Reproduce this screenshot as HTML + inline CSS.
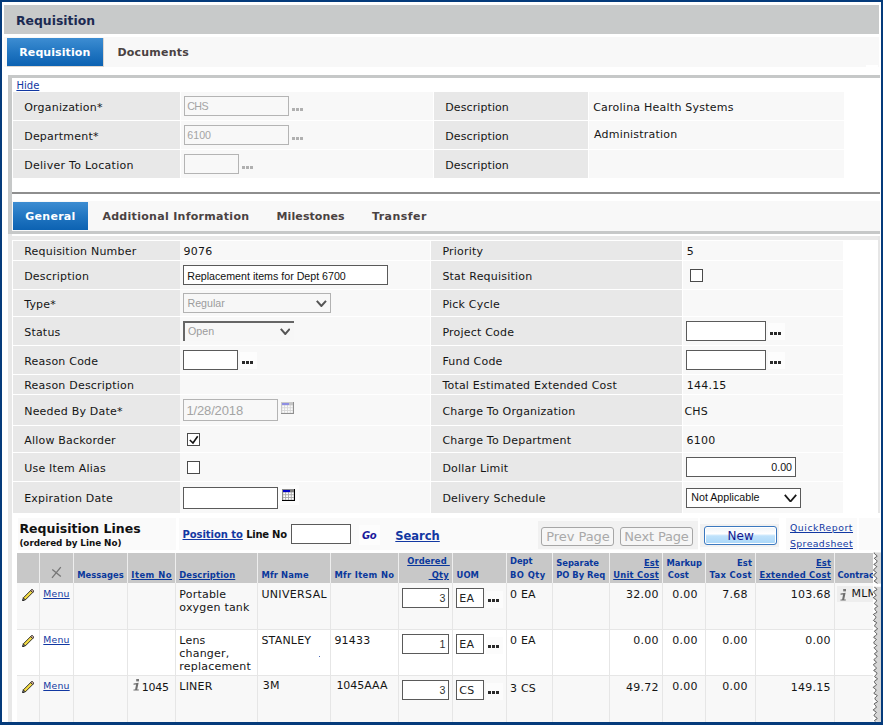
<!DOCTYPE html>
<html lang="en">
<head>
<meta charset="utf-8">
<title>Requisition</title>
<style>
html,body{margin:0;padding:0;}
body{width:883px;height:725px;overflow:hidden;background:#fff;position:relative;font-family:'DejaVu Sans', 'Liberation Sans', sans-serif;}
#app{position:absolute;left:0;top:0;width:883px;height:725px;overflow:hidden;}
#app div,#app span,#app a,#app svg{position:absolute;box-sizing:border-box;}
.t{white-space:nowrap;}
a.t{text-decoration:underline;}
</style>
</head>
<body>
<div id="app">
<div style="left:0px;top:0px;width:883px;height:725px;background:#fff;"></div>
<div style="left:4px;top:5px;width:875px;height:29px;background:#c8caca;"></div>
<span class="t" id="t0" style="top:13px;font:bold 12.4px/15px 'DejaVu Sans', 'Liberation Sans', sans-serif;color:#1c2a52;left:16px;letter-spacing:0.017px;">Requisition</span>
<div style="left:4px;top:37px;width:875px;height:30px;background:#f8f8f8;"></div>
<div style="left:6.5px;top:37.5px;width:97.2px;height:29px;background:#dcd6d0;"></div>
<div style="left:7px;top:38px;width:96.4px;height:28.1px;background:linear-gradient(#3d8dd2,#1f74c0 55%,#0c62b2);"></div>
<span class="t" id="t1" style="top:46px;font:bold 11px/13px 'DejaVu Sans', 'Liberation Sans', sans-serif;color:#fff;left:19.3px;letter-spacing:0.077px;">Requisition</span>
<span class="t" id="t2" style="top:46px;font:bold 11px/13px 'DejaVu Sans', 'Liberation Sans', sans-serif;color:#4a4242;left:117.4px;letter-spacing:0.221px;">Documents</span>
<div style="left:866px;top:65px;width:12px;height:2px;background:#fff;"></div>
<div style="left:8px;top:75px;width:872px;height:3px;background:#c6c8c8;"></div>
<div style="left:8px;top:75px;width:4px;height:159px;background:#c6c8c8;"></div>
<div style="left:8px;top:234px;width:4px;height:488px;background:#e8e8e8;"></div>
<a href="#" class="t" id="t3" style="top:80px;font:normal 10px/11px 'DejaVu Sans', 'Liberation Sans', sans-serif;color:#1238a2;left:16.4px;letter-spacing:0.047px;">Hide</a>
<div style="left:13px;top:92px;width:167px;height:28px;background:#e8e8e8;"></div>
<div style="left:181px;top:92px;width:252px;height:28px;background:#f8f8f8;"></div>
<div style="left:434px;top:92px;width:154px;height:28px;background:#e8e8e8;"></div>
<div style="left:589px;top:92px;width:255px;height:28px;background:#f8f8f8;"></div>
<span class="t" id="t4" style="top:101px;font:normal 11px/13px 'DejaVu Sans', 'Liberation Sans', sans-serif;color:#151515;left:24.2px;letter-spacing:0.206px;">Organization*</span>
<span class="t" id="t5" style="top:101px;font:normal 11px/13px 'DejaVu Sans', 'Liberation Sans', sans-serif;color:#151515;left:445.3px;letter-spacing:0.086px;">Description</span>
<div style="left:13px;top:121px;width:167px;height:28px;background:#e8e8e8;"></div>
<div style="left:181px;top:121px;width:252px;height:28px;background:#f8f8f8;"></div>
<div style="left:434px;top:121px;width:154px;height:28px;background:#e8e8e8;"></div>
<div style="left:589px;top:121px;width:255px;height:28px;background:#f8f8f8;"></div>
<span class="t" id="t6" style="top:130px;font:normal 11px/13px 'DejaVu Sans', 'Liberation Sans', sans-serif;color:#151515;left:24.2px;letter-spacing:0.220px;">Department*</span>
<span class="t" id="t7" style="top:130px;font:normal 11px/13px 'DejaVu Sans', 'Liberation Sans', sans-serif;color:#151515;left:445.3px;letter-spacing:0.086px;">Description</span>
<div style="left:13px;top:150px;width:167px;height:28px;background:#e8e8e8;"></div>
<div style="left:181px;top:150px;width:252px;height:28px;background:#f8f8f8;"></div>
<div style="left:434px;top:150px;width:154px;height:28px;background:#e8e8e8;"></div>
<div style="left:589px;top:150px;width:255px;height:28px;background:#f8f8f8;"></div>
<span class="t" id="t8" style="top:159px;font:normal 11px/13px 'DejaVu Sans', 'Liberation Sans', sans-serif;color:#151515;left:24.2px;letter-spacing:0.282px;">Deliver To Location</span>
<span class="t" id="t9" style="top:159px;font:normal 11px/13px 'DejaVu Sans', 'Liberation Sans', sans-serif;color:#151515;left:445.3px;letter-spacing:0.086px;">Description</span>
<div style="left:184px;top:96px;width:105px;height:20px;background:#f8f8f8;border:1px solid #b4b4b4;"></div>
<span class="t" id="t10" style="top:100px;font:normal 10.67px/12px 'Liberation Sans', 'DejaVu Sans', sans-serif;color:#a4a4a4;left:187.3px;letter-spacing:-0.633px;">CHS</span>
<svg style="left:292px;top:107.5px" width="11" height="3" viewBox="0 0 11 3"><rect x="0" y="0" width="3" height="3" fill="#b0b0b0"/><rect x="4" y="0" width="3" height="3" fill="#b0b0b0"/><rect x="8" y="0" width="3" height="3" fill="#b0b0b0"/></svg>
<div style="left:184px;top:125px;width:105px;height:20px;background:#f8f8f8;border:1px solid #b4b4b4;"></div>
<span class="t" id="t11" style="top:129px;font:normal 10.67px/12px 'Liberation Sans', 'DejaVu Sans', sans-serif;color:#a4a4a4;left:187.3px;">6100</span>
<svg style="left:292px;top:136.5px" width="11" height="3" viewBox="0 0 11 3"><rect x="0" y="0" width="3" height="3" fill="#b0b0b0"/><rect x="4" y="0" width="3" height="3" fill="#b0b0b0"/><rect x="8" y="0" width="3" height="3" fill="#b0b0b0"/></svg>
<div style="left:184px;top:154px;width:55px;height:20px;background:#f8f8f8;border:1px solid #b4b4b4;"></div>
<svg style="left:242px;top:165.5px" width="11" height="3" viewBox="0 0 11 3"><rect x="0" y="0" width="3" height="3" fill="#b0b0b0"/><rect x="4" y="0" width="3" height="3" fill="#b0b0b0"/><rect x="8" y="0" width="3" height="3" fill="#b0b0b0"/></svg>
<span class="t" id="t12" style="top:101px;font:normal 11px/13px 'DejaVu Sans', 'Liberation Sans', sans-serif;color:#151515;left:593.2px;letter-spacing:0.238px;">Carolina Health Systems</span>
<span class="t" id="t13" style="top:128px;font:normal 11px/13px 'DejaVu Sans', 'Liberation Sans', sans-serif;color:#151515;left:594px;letter-spacing:0.210px;">Administration</span>
<div style="left:12px;top:192px;width:868px;height:2px;background:#8e8e8e;"></div>
<div style="left:12px;top:201px;width:868px;height:30px;background:#f8f8f8;"></div>
<div style="left:13px;top:202px;width:75.3px;height:28.1px;background:linear-gradient(#3d8dd2,#1f74c0 55%,#0c62b2);"></div>
<span class="t" id="t14" style="top:210px;font:bold 11px/13px 'DejaVu Sans', 'Liberation Sans', sans-serif;color:#fff;left:25.3px;letter-spacing:0.271px;">General</span>
<span class="t" id="t15" style="top:210px;font:bold 11px/13px 'DejaVu Sans', 'Liberation Sans', sans-serif;color:#4a4242;left:102.4px;letter-spacing:0.297px;">Additional Information</span>
<span class="t" id="t16" style="top:210px;font:bold 11px/13px 'DejaVu Sans', 'Liberation Sans', sans-serif;color:#4a4242;left:276.6px;letter-spacing:0.084px;">Milestones</span>
<span class="t" id="t17" style="top:210px;font:bold 11px/13px 'DejaVu Sans', 'Liberation Sans', sans-serif;color:#4a4242;left:372px;letter-spacing:0.450px;">Transfer</span>
<div style="left:12px;top:231px;width:868px;height:3.2px;background:#c6c8c8;"></div>
<div style="left:12px;top:236px;width:868px;height:4px;background:#e9e9e9;"></div>
<div style="left:878px;top:236px;width:2.4px;height:277px;background:#e6e6e6;"></div>
<div style="left:13px;top:241px;width:166.5px;height:19px;background:#e8e8e8;"></div>
<div style="left:180px;top:241px;width:250.3px;height:19px;background:#f8f8f8;"></div>
<div style="left:431px;top:241px;width:251px;height:19px;background:#e8e8e8;"></div>
<div style="left:683px;top:241px;width:160px;height:19px;background:#f8f8f8;"></div>
<span class="t" id="t18" style="top:245px;font:normal 11px/13px 'DejaVu Sans', 'Liberation Sans', sans-serif;color:#151515;left:24.2px;letter-spacing:0.210px;">Requisition Number</span>
<span class="t" id="t19" style="top:245px;font:normal 11px/13px 'DejaVu Sans', 'Liberation Sans', sans-serif;color:#151515;left:442.4px;letter-spacing:0.210px;">Priority</span>
<div style="left:13px;top:261px;width:166.5px;height:28px;background:#e8e8e8;"></div>
<div style="left:180px;top:261px;width:250.3px;height:28px;background:#f8f8f8;"></div>
<div style="left:431px;top:261px;width:251px;height:28px;background:#e8e8e8;"></div>
<div style="left:683px;top:261px;width:160px;height:28px;background:#f8f8f8;"></div>
<span class="t" id="t20" style="top:270px;font:normal 11px/13px 'DejaVu Sans', 'Liberation Sans', sans-serif;color:#151515;left:24.2px;letter-spacing:0.210px;">Description</span>
<span class="t" id="t21" style="top:270px;font:normal 11px/13px 'DejaVu Sans', 'Liberation Sans', sans-serif;color:#151515;left:442.4px;letter-spacing:0.210px;">Stat Requisition</span>
<div style="left:13px;top:290px;width:166.5px;height:26.100000000000023px;background:#e8e8e8;"></div>
<div style="left:180px;top:290px;width:250.3px;height:26.100000000000023px;background:#f8f8f8;"></div>
<div style="left:431px;top:290px;width:251px;height:26.100000000000023px;background:#e8e8e8;"></div>
<div style="left:683px;top:290px;width:160px;height:26.100000000000023px;background:#f8f8f8;"></div>
<span class="t" id="t22" style="top:298px;font:normal 11px/13px 'DejaVu Sans', 'Liberation Sans', sans-serif;color:#151515;left:24.2px;letter-spacing:0.210px;">Type*</span>
<span class="t" id="t23" style="top:298px;font:normal 11px/13px 'DejaVu Sans', 'Liberation Sans', sans-serif;color:#151515;left:442.4px;letter-spacing:0.210px;">Pick Cycle</span>
<div style="left:13px;top:317px;width:166.5px;height:28px;background:#e8e8e8;"></div>
<div style="left:180px;top:317px;width:250.3px;height:28px;background:#f8f8f8;"></div>
<div style="left:431px;top:317px;width:251px;height:28px;background:#e8e8e8;"></div>
<div style="left:683px;top:317px;width:160px;height:28px;background:#f8f8f8;"></div>
<span class="t" id="t24" style="top:326px;font:normal 11px/13px 'DejaVu Sans', 'Liberation Sans', sans-serif;color:#151515;left:24.2px;letter-spacing:0.210px;">Status</span>
<span class="t" id="t25" style="top:326px;font:normal 11px/13px 'DejaVu Sans', 'Liberation Sans', sans-serif;color:#151515;left:442.4px;letter-spacing:0.210px;">Project Code</span>
<div style="left:13px;top:346px;width:166.5px;height:28px;background:#e8e8e8;"></div>
<div style="left:180px;top:346px;width:250.3px;height:28px;background:#f8f8f8;"></div>
<div style="left:431px;top:346px;width:251px;height:28px;background:#e8e8e8;"></div>
<div style="left:683px;top:346px;width:160px;height:28px;background:#f8f8f8;"></div>
<span class="t" id="t26" style="top:355px;font:normal 11px/13px 'DejaVu Sans', 'Liberation Sans', sans-serif;color:#151515;left:24.2px;letter-spacing:0.210px;">Reason Code</span>
<span class="t" id="t27" style="top:355px;font:normal 11px/13px 'DejaVu Sans', 'Liberation Sans', sans-serif;color:#151515;left:442.4px;letter-spacing:0.210px;">Fund Code</span>
<div style="left:13px;top:375px;width:166.5px;height:19px;background:#e8e8e8;"></div>
<div style="left:180px;top:375px;width:250.3px;height:19px;background:#f8f8f8;"></div>
<div style="left:431px;top:375px;width:251px;height:19px;background:#e8e8e8;"></div>
<div style="left:683px;top:375px;width:160px;height:19px;background:#f8f8f8;"></div>
<span class="t" id="t28" style="top:379px;font:normal 11px/13px 'DejaVu Sans', 'Liberation Sans', sans-serif;color:#151515;left:24.2px;letter-spacing:0.210px;">Reason Description</span>
<span class="t" id="t29" style="top:379px;font:normal 11px/13px 'DejaVu Sans', 'Liberation Sans', sans-serif;color:#151515;left:442.4px;letter-spacing:0.210px;">Total Estimated Extended Cost</span>
<div style="left:13px;top:395px;width:166.5px;height:30px;background:#e8e8e8;"></div>
<div style="left:180px;top:395px;width:250.3px;height:30px;background:#f8f8f8;"></div>
<div style="left:431px;top:395px;width:251px;height:30px;background:#e8e8e8;"></div>
<div style="left:683px;top:395px;width:160px;height:30px;background:#f8f8f8;"></div>
<span class="t" id="t30" style="top:405px;font:normal 11px/13px 'DejaVu Sans', 'Liberation Sans', sans-serif;color:#151515;left:24.2px;letter-spacing:0.210px;">Needed By Date*</span>
<span class="t" id="t31" style="top:405px;font:normal 11px/13px 'DejaVu Sans', 'Liberation Sans', sans-serif;color:#151515;left:442.4px;letter-spacing:0.210px;">Charge To Organization</span>
<div style="left:13px;top:426px;width:166.5px;height:26px;background:#e8e8e8;"></div>
<div style="left:180px;top:426px;width:250.3px;height:26px;background:#f8f8f8;"></div>
<div style="left:431px;top:426px;width:251px;height:26px;background:#e8e8e8;"></div>
<div style="left:683px;top:426px;width:160px;height:26px;background:#f8f8f8;"></div>
<span class="t" id="t32" style="top:434px;font:normal 11px/13px 'DejaVu Sans', 'Liberation Sans', sans-serif;color:#151515;left:24.2px;letter-spacing:0.210px;">Allow Backorder</span>
<span class="t" id="t33" style="top:434px;font:normal 11px/13px 'DejaVu Sans', 'Liberation Sans', sans-serif;color:#151515;left:442.4px;letter-spacing:0.210px;">Charge To Department</span>
<div style="left:13px;top:453px;width:166.5px;height:28px;background:#e8e8e8;"></div>
<div style="left:180px;top:453px;width:250.3px;height:28px;background:#f8f8f8;"></div>
<div style="left:431px;top:453px;width:251px;height:28px;background:#e8e8e8;"></div>
<div style="left:683px;top:453px;width:160px;height:28px;background:#f8f8f8;"></div>
<span class="t" id="t34" style="top:462px;font:normal 11px/13px 'DejaVu Sans', 'Liberation Sans', sans-serif;color:#151515;left:24.2px;letter-spacing:0.210px;">Use Item Alias</span>
<span class="t" id="t35" style="top:462px;font:normal 11px/13px 'DejaVu Sans', 'Liberation Sans', sans-serif;color:#151515;left:442.4px;letter-spacing:0.210px;">Dollar Limit</span>
<div style="left:13px;top:482px;width:166.5px;height:30.5px;background:#e8e8e8;"></div>
<div style="left:180px;top:482px;width:250.3px;height:30.5px;background:#f8f8f8;"></div>
<div style="left:431px;top:482px;width:251px;height:30.5px;background:#e8e8e8;"></div>
<div style="left:683px;top:482px;width:160px;height:30.5px;background:#f8f8f8;"></div>
<span class="t" id="t36" style="top:492px;font:normal 11px/13px 'DejaVu Sans', 'Liberation Sans', sans-serif;color:#151515;left:24.2px;letter-spacing:0.210px;">Expiration Date</span>
<span class="t" id="t37" style="top:492px;font:normal 11px/13px 'DejaVu Sans', 'Liberation Sans', sans-serif;color:#151515;left:442.4px;letter-spacing:0.210px;">Delivery Schedule</span>
<span class="t" id="t38" style="top:245px;font:normal 11px/13px 'DejaVu Sans', 'Liberation Sans', sans-serif;color:#151515;left:183.6px;letter-spacing:0.210px;">9076</span>
<div style="left:183px;top:265px;width:205px;height:20px;background:#fff;border:1px solid #5a5a5a;"></div>
<span class="t" id="t39" style="top:270px;font:normal 10.67px/12px 'Liberation Sans', 'DejaVu Sans', sans-serif;color:#111;left:187.2px;letter-spacing:-0.005px;">Replacement items for Dept 6700</span>
<div style="left:183px;top:293px;width:148px;height:20px;background:#f7f7f7;border:1px solid #b2b2b2;"></div>
<span class="t" id="t40" style="top:297px;font:normal 10.67px/12px 'Liberation Sans', 'DejaVu Sans', sans-serif;color:#9c9c9c;left:187.5px;">Regular</span>
<svg style="left:316px;top:299.6px" width="10.8" height="7" viewBox="0 0 10.8 7"><path d="M0.8 0.8 L5.4 6 L10.0 0.8" fill="none" stroke="#555" stroke-width="2"/></svg>
<div style="left:183px;top:321px;width:111px;height:20px;background:#f7f7f7;border-top:2px solid #666;border-left:2px solid #666;"></div>
<span class="t" id="t41" style="top:325px;font:normal 10.67px/12px 'Liberation Sans', 'DejaVu Sans', sans-serif;color:#9c9c9c;left:188px;">Open</span>
<svg style="left:279.8px;top:327.6px" width="10.6" height="7" viewBox="0 0 10.6 7"><path d="M0.8 0.8 L5.3 6 L9.799999999999999 0.8" fill="none" stroke="#555" stroke-width="2"/></svg>
<div style="left:183px;top:350px;width:55px;height:20px;background:#fff;border:1px solid #5a5a5a;"></div>
<div style="left:240px;top:351.8px;width:17px;height:17px;background:#fdfdfd;"></div>
<svg style="left:242px;top:360.8px" width="11" height="3" viewBox="0 0 11 3"><rect x="0" y="0" width="3" height="3" fill="#2a2a2a"/><rect x="4" y="0" width="3" height="3" fill="#2a2a2a"/><rect x="8" y="0" width="3" height="3" fill="#2a2a2a"/></svg>
<div style="left:183px;top:399px;width:95px;height:22px;background:#f8f8f8;border:1px solid #b4b4b4;"></div>
<span class="t" id="t42" style="top:403px;font:normal 13px/15px 'Liberation Sans', 'DejaVu Sans', sans-serif;color:#a4a4a4;left:186.4px;letter-spacing:-0.138px;">1/28/2018</span>
<svg style="left:281px;top:402px;opacity:0.42;" width="13" height="12" viewBox="0 0 13 12"><rect x="0" y="0" width="13" height="12" fill="#a8a8a8"/><rect x="0" y="0" width="13" height="1" fill="#8a8a8a"/><rect x="0" y="0" width="1" height="12" fill="#8a8a8a"/><rect x="12" y="0" width="1" height="12" fill="#000"/><rect x="0" y="11" width="13" height="1" fill="#000"/><rect x="1" y="1" width="7" height="2.1" fill="#0000c8"/><rect x="8" y="1" width="4" height="2.1" fill="#808080"/><rect x="1.3" y="3.5" width="1.9" height="1.8" fill="#fff"/><rect x="4.1" y="3.5" width="1.9" height="1.8" fill="#fff"/><rect x="6.9" y="3.5" width="1.9" height="1.8" fill="#fff"/><rect x="9.7" y="3.5" width="1.9" height="1.8" fill="#fff"/><rect x="1.3" y="6.2" width="1.9" height="1.8" fill="#fff"/><rect x="4.1" y="6.2" width="1.9" height="1.8" fill="#fff"/><rect x="6.9" y="6.2" width="1.9" height="1.8" fill="#fff"/><rect x="9.7" y="6.2" width="1.9" height="1.8" fill="#fff"/><rect x="1.3" y="8.9" width="1.9" height="1.8" fill="#fff"/><rect x="4.1" y="8.9" width="1.9" height="1.8" fill="#fff"/><rect x="6.9" y="8.9" width="1.9" height="1.8" fill="#fff"/><rect x="9.7" y="8.9" width="1.9" height="1.8" fill="#fff"/></svg>
<div style="left:187px;top:433px;width:13px;height:13px;background:#fff;border:1px solid #4a4a4a;"></div>
<svg style="left:187px;top:433px" width="13" height="13" viewBox="0 0 13 13"><path d="M2.8 7 L6 10 L10.7 3.3" fill="none" stroke="#111" stroke-width="1.6"/></svg>
<div style="left:187px;top:461px;width:13px;height:13px;background:#fff;border:1px solid #4a4a4a;"></div>
<div style="left:183px;top:487px;width:95px;height:22px;background:#fff;border:1px solid #5a5a5a;"></div>
<div style="left:278.4px;top:484.8px;width:20.6px;height:20px;background:#fcfcfc;"></div>
<svg style="left:282px;top:489px;" width="13" height="12" viewBox="0 0 13 12"><rect x="0" y="0" width="13" height="12" fill="#a8a8a8"/><rect x="0" y="0" width="13" height="1" fill="#8a8a8a"/><rect x="0" y="0" width="1" height="12" fill="#8a8a8a"/><rect x="12" y="0" width="1" height="12" fill="#000"/><rect x="0" y="11" width="13" height="1" fill="#000"/><rect x="1" y="1" width="7" height="2.1" fill="#0000c8"/><rect x="8" y="1" width="4" height="2.1" fill="#808080"/><rect x="1.3" y="3.5" width="1.9" height="1.8" fill="#fff"/><rect x="4.1" y="3.5" width="1.9" height="1.8" fill="#fff"/><rect x="6.9" y="3.5" width="1.9" height="1.8" fill="#fff"/><rect x="9.7" y="3.5" width="1.9" height="1.8" fill="#fff"/><rect x="1.3" y="6.2" width="1.9" height="1.8" fill="#fff"/><rect x="4.1" y="6.2" width="1.9" height="1.8" fill="#fff"/><rect x="6.9" y="6.2" width="1.9" height="1.8" fill="#fff"/><rect x="9.7" y="6.2" width="1.9" height="1.8" fill="#fff"/><rect x="1.3" y="8.9" width="1.9" height="1.8" fill="#fff"/><rect x="4.1" y="8.9" width="1.9" height="1.8" fill="#fff"/><rect x="6.9" y="8.9" width="1.9" height="1.8" fill="#fff"/><rect x="9.7" y="8.9" width="1.9" height="1.8" fill="#fff"/></svg>
<span class="t" id="t43" style="top:245px;font:normal 11px/13px 'DejaVu Sans', 'Liberation Sans', sans-serif;color:#151515;left:686.8px;letter-spacing:0.210px;">5</span>
<div style="left:690px;top:269px;width:13px;height:13px;background:#fff;border:1px solid #4a4a4a;"></div>
<div style="left:686px;top:321px;width:80px;height:20px;background:#fff;border:1px solid #5a5a5a;"></div>
<div style="left:768px;top:322.6px;width:17px;height:17px;background:#fdfdfd;"></div>
<svg style="left:770px;top:331.6px" width="11" height="3" viewBox="0 0 11 3"><rect x="0" y="0" width="3" height="3" fill="#2a2a2a"/><rect x="4" y="0" width="3" height="3" fill="#2a2a2a"/><rect x="8" y="0" width="3" height="3" fill="#2a2a2a"/></svg>
<div style="left:686px;top:350px;width:80px;height:20px;background:#fff;border:1px solid #5a5a5a;"></div>
<div style="left:768px;top:351.6px;width:17px;height:17px;background:#fdfdfd;"></div>
<svg style="left:770px;top:360.6px" width="11" height="3" viewBox="0 0 11 3"><rect x="0" y="0" width="3" height="3" fill="#2a2a2a"/><rect x="4" y="0" width="3" height="3" fill="#2a2a2a"/><rect x="8" y="0" width="3" height="3" fill="#2a2a2a"/></svg>
<span class="t" id="t44" style="top:379px;font:normal 11px/13px 'DejaVu Sans', 'Liberation Sans', sans-serif;color:#151515;left:686.8px;letter-spacing:0.210px;">144.15</span>
<span class="t" id="t45" style="top:405px;font:normal 11px/13px 'DejaVu Sans', 'Liberation Sans', sans-serif;color:#151515;left:684.4px;letter-spacing:0.210px;">CHS</span>
<span class="t" id="t46" style="top:434px;font:normal 11px/13px 'DejaVu Sans', 'Liberation Sans', sans-serif;color:#151515;left:686.6px;letter-spacing:0.210px;">6100</span>
<div style="left:686px;top:457px;width:110px;height:20px;background:#fff;border:1px solid #5a5a5a;"></div>
<span class="t" id="t47" style="top:461px;font:normal 10.67px/12px 'Liberation Sans', 'DejaVu Sans', sans-serif;color:#111;right:91px;">0.00</span>
<div style="left:686px;top:488px;width:115px;height:20px;background:#fff;border:1px solid #5a5a5a;"></div>
<span class="t" id="t48" style="top:491px;font:normal 10.67px/12px 'Liberation Sans', 'DejaVu Sans', sans-serif;color:#111;left:691.3px;">Not Applicable</span>
<svg style="left:783.5px;top:493.5px" width="13" height="8.5" viewBox="0 0 13 8.5"><path d="M0.8 0.8 L6.5 7.5 L12.2 0.8" fill="none" stroke="#1a1a1a" stroke-width="1.8"/></svg>
<div style="left:17.5px;top:517.5px;width:158.3px;height:32.3px;background:#fafafa;"></div>
<div style="left:179px;top:517.5px;width:519px;height:32.3px;background:#fafafa;"></div>
<div style="left:700px;top:517.5px;width:79px;height:32.3px;background:#fafafa;"></div>
<div style="left:786px;top:517.5px;width:71px;height:32.3px;background:#fafafa;"></div>
<div style="left:859px;top:517.5px;width:21px;height:32.3px;background:#fafafa;"></div>
<span class="t" id="t49" style="top:521px;font:bold 12.5px/15px 'DejaVu Sans', 'Liberation Sans', sans-serif;color:#111;left:19.4px;letter-spacing:0.010px;">Requisition Lines</span>
<span class="t" id="t50" style="top:538px;font:bold 8.8px/10px 'DejaVu Sans', 'Liberation Sans', sans-serif;color:#111;left:19.4px;letter-spacing:-0.038px;">(ordered by Line No)</span>
<a href="#" class="t" id="t51" style="top:529px;font:bold 10px/11px 'DejaVu Sans', 'Liberation Sans', sans-serif;color:#1238a2;left:182.5px;letter-spacing:-0.057px;">Position to</a>
<span class="t" id="t52" style="top:529px;font:bold 10px/11px 'DejaVu Sans', 'Liberation Sans', sans-serif;color:#111;left:246.2px;letter-spacing:-0.260px;">Line No</span>
<div style="left:291px;top:524px;width:60px;height:20px;background:#fff;border:1px solid #5a5a5a;"></div>
<div style="left:358.5px;top:524.5px;width:21.5px;height:20px;background:#fdfdfd;"></div>
<span class="t" id="t53" style="top:530px;font:italic bold 10px/11px 'DejaVu Sans', 'Liberation Sans', sans-serif;color:#1a1a9c;left:362px;letter-spacing:-0.339px;">Go</span>
<a href="#" class="t" id="t54" style="top:529px;font:bold 11.5px/14px 'DejaVu Sans', 'Liberation Sans', sans-serif;color:#1238a2;left:395.3px;letter-spacing:-0.005px;">Search</a>
<div style="left:538px;top:521px;width:159.5px;height:27.5px;background:#f1f1f1;"></div>
<div style="left:541px;top:527px;width:73px;height:19px;background:#f6f6f6;border:1px solid #a6a6a6;border-radius:3px;"></div>
<span class="t" id="t55" style="top:529px;font:normal 13px/15px 'DejaVu Sans', 'Liberation Sans', sans-serif;color:#a9a9a9;left:546.2px;letter-spacing:-0.041px;">Prev Page</span>
<div style="left:620px;top:527px;width:73px;height:19px;background:#f6f6f6;border:1px solid #a6a6a6;border-radius:3px;"></div>
<span class="t" id="t56" style="top:529px;font:normal 13px/15px 'DejaVu Sans', 'Liberation Sans', sans-serif;color:#a9a9a9;left:624.3px;letter-spacing:-0.166px;">Next Page</span>
<div style="left:700px;top:524px;width:79px;height:22.5px;background:#f1f1f1;"></div>
<div style="left:704px;top:526px;width:73px;height:19px;background:linear-gradient(#eef3f8 0,#ffffff 40%,#bfe2fb 52%,#a9d6f8 100%);border:1px solid #3b78bf;border-radius:3px;box-shadow:inset 0 0 0 1px #fff;"></div>
<span class="t" id="t57" style="top:529px;font:normal 12px/14px 'DejaVu Sans', 'Liberation Sans', sans-serif;color:#15158c;left:727.4px;letter-spacing:0.138px;">New</span>
<a href="#" class="t" id="t58" style="top:522px;font:normal 9.3px/11px 'DejaVu Sans', 'Liberation Sans', sans-serif;color:#1238a2;left:790px;letter-spacing:0.536px;">QuickReport</a>
<a href="#" class="t" id="t59" style="top:538px;font:normal 9.3px/11px 'DejaVu Sans', 'Liberation Sans', sans-serif;color:#1238a2;left:790px;letter-spacing:0.403px;">Spreadsheet</a>
<div style="left:17px;top:552.6px;width:864px;height:30.2px;background:#c8c8c8;"></div>
<div style="left:17px;top:582.8px;width:864px;height:46.5px;background:#f8f8f8;"></div>
<div style="left:17px;top:629.3px;width:864px;height:46.0px;background:#ffffff;"></div>
<div style="left:17px;top:675.3px;width:864px;height:46.700000000000045px;background:#f8f8f8;"></div>
<div style="left:17px;top:628.9px;width:864px;height:1px;background:#e6e6e6;"></div>
<div style="left:17px;top:674.9px;width:864px;height:1px;background:#e6e6e6;"></div>
<div style="left:39px;top:552.6px;width:1px;height:30.2px;background:#eeeeee;"></div>
<div style="left:39px;top:582.8px;width:1px;height:139.2px;background:#e6e6e6;"></div>
<div style="left:73px;top:552.6px;width:1px;height:30.2px;background:#eeeeee;"></div>
<div style="left:73px;top:582.8px;width:1px;height:139.2px;background:#e6e6e6;"></div>
<div style="left:127px;top:552.6px;width:1px;height:30.2px;background:#eeeeee;"></div>
<div style="left:127px;top:582.8px;width:1px;height:139.2px;background:#e6e6e6;"></div>
<div style="left:175px;top:552.6px;width:1px;height:30.2px;background:#eeeeee;"></div>
<div style="left:175px;top:582.8px;width:1px;height:139.2px;background:#e6e6e6;"></div>
<div style="left:257px;top:552.6px;width:1px;height:30.2px;background:#eeeeee;"></div>
<div style="left:257px;top:582.8px;width:1px;height:139.2px;background:#e6e6e6;"></div>
<div style="left:330px;top:552.6px;width:1px;height:30.2px;background:#eeeeee;"></div>
<div style="left:330px;top:582.8px;width:1px;height:139.2px;background:#e6e6e6;"></div>
<div style="left:398px;top:552.6px;width:1px;height:30.2px;background:#eeeeee;"></div>
<div style="left:398px;top:582.8px;width:1px;height:139.2px;background:#e6e6e6;"></div>
<div style="left:452px;top:552.6px;width:1px;height:30.2px;background:#eeeeee;"></div>
<div style="left:452px;top:582.8px;width:1px;height:139.2px;background:#e6e6e6;"></div>
<div style="left:506px;top:552.6px;width:1px;height:30.2px;background:#eeeeee;"></div>
<div style="left:506px;top:582.8px;width:1px;height:139.2px;background:#e6e6e6;"></div>
<div style="left:552px;top:552.6px;width:1px;height:30.2px;background:#eeeeee;"></div>
<div style="left:552px;top:582.8px;width:1px;height:139.2px;background:#e6e6e6;"></div>
<div style="left:609px;top:552.6px;width:1px;height:30.2px;background:#eeeeee;"></div>
<div style="left:609px;top:582.8px;width:1px;height:139.2px;background:#e6e6e6;"></div>
<div style="left:662px;top:552.6px;width:1px;height:30.2px;background:#eeeeee;"></div>
<div style="left:662px;top:582.8px;width:1px;height:139.2px;background:#e6e6e6;"></div>
<div style="left:705px;top:552.6px;width:1px;height:30.2px;background:#eeeeee;"></div>
<div style="left:705px;top:582.8px;width:1px;height:139.2px;background:#e6e6e6;"></div>
<div style="left:755px;top:552.6px;width:1px;height:30.2px;background:#eeeeee;"></div>
<div style="left:755px;top:582.8px;width:1px;height:139.2px;background:#e6e6e6;"></div>
<div style="left:834px;top:552.6px;width:1px;height:30.2px;background:#eeeeee;"></div>
<div style="left:834px;top:582.8px;width:1px;height:139.2px;background:#e6e6e6;"></div>
<svg style="left:51px;top:566px" width="11" height="13" viewBox="0 0 11 13"><path d="M1 11.8 L9.8 1.2 M1.3 3.5 L9.8 10.6" stroke="#767676" stroke-width="1.3" fill="none"/></svg>
<span class="t" id="t60" style="top:569px;font:bold 9.3px/11px 'DejaVu Sans Condensed', 'DejaVu Sans', sans-serif;color:#0a389c;left:77.2px;letter-spacing:0.044px;">Messages</span>
<a href="#" class="t" id="t61" style="top:569px;font:bold 9.3px/11px 'DejaVu Sans Condensed', 'DejaVu Sans', sans-serif;color:#0a389c;left:131.3px;letter-spacing:0.506px;text-decoration:underline;">Item No</a>
<a href="#" class="t" id="t62" style="top:569px;font:bold 9.3px/11px 'DejaVu Sans Condensed', 'DejaVu Sans', sans-serif;color:#0a389c;left:179.2px;letter-spacing:0.181px;text-decoration:underline;">Description</a>
<span class="t" id="t63" style="top:569px;font:bold 9.3px/11px 'DejaVu Sans Condensed', 'DejaVu Sans', sans-serif;color:#0a389c;left:261.4px;letter-spacing:0.171px;">Mfr Name</span>
<span class="t" id="t64" style="top:569px;font:bold 9.3px/11px 'DejaVu Sans Condensed', 'DejaVu Sans', sans-serif;color:#0a389c;left:334.4px;letter-spacing:0.349px;">Mfr Item No</span>
<a href="#" class="t" id="t65" style="top:555px;font:bold 9.3px/11px 'DejaVu Sans Condensed', 'DejaVu Sans', sans-serif;color:#0a389c;right:433.2px;letter-spacing:0.124px;text-decoration:underline;">Ordered&nbsp;</a>
<a href="#" class="t" id="t66" style="top:569px;font:bold 9.3px/11px 'DejaVu Sans Condensed', 'DejaVu Sans', sans-serif;color:#0a389c;right:434px;letter-spacing:0.229px;text-decoration:underline;">&nbsp;Qty</a>
<span class="t" id="t67" style="top:569px;font:bold 9.3px/11px 'DejaVu Sans Condensed', 'DejaVu Sans', sans-serif;color:#0a389c;left:456.5px;letter-spacing:0.089px;">UOM</span>
<span class="t" id="t68" style="top:555px;font:bold 9.3px/11px 'DejaVu Sans Condensed', 'DejaVu Sans', sans-serif;color:#0a389c;left:510px;">Dept</span>
<span class="t" id="t69" style="top:569px;font:bold 9.3px/11px 'DejaVu Sans Condensed', 'DejaVu Sans', sans-serif;color:#0a389c;left:510px;letter-spacing:0.458px;">BO Qty</span>
<span class="t" id="t70" style="top:557px;font:bold 9.3px/11px 'DejaVu Sans Condensed', 'DejaVu Sans', sans-serif;color:#0a389c;left:556.2px;">Separate</span>
<span class="t" id="t71" style="top:569px;font:bold 9.3px/11px 'DejaVu Sans Condensed', 'DejaVu Sans', sans-serif;color:#0a389c;left:556.2px;">PO By Req</span>
<a href="#" class="t" id="t72" style="top:557px;font:bold 9.3px/11px 'DejaVu Sans Condensed', 'DejaVu Sans', sans-serif;color:#0a389c;right:224px;letter-spacing:0.099px;text-decoration:underline;">Est</a>
<a href="#" class="t" id="t73" style="top:569px;font:bold 9.3px/11px 'DejaVu Sans Condensed', 'DejaVu Sans', sans-serif;color:#0a389c;right:224px;letter-spacing:0.268px;text-decoration:underline;">Unit Cost</a>
<span class="t" id="t74" style="top:557px;font:bold 9.3px/11px 'DejaVu Sans Condensed', 'DejaVu Sans', sans-serif;color:#0a389c;left:666.5px;letter-spacing:-0.018px;">Markup</span>
<span class="t" id="t75" style="top:569px;font:bold 9.3px/11px 'DejaVu Sans Condensed', 'DejaVu Sans', sans-serif;color:#0a389c;left:667.8px;">Cost</span>
<span class="t" id="t76" style="top:557px;font:bold 9.3px/11px 'DejaVu Sans Condensed', 'DejaVu Sans', sans-serif;color:#0a389c;right:131px;letter-spacing:0.099px;">Est</span>
<span class="t" id="t77" style="top:569px;font:bold 9.3px/11px 'DejaVu Sans Condensed', 'DejaVu Sans', sans-serif;color:#0a389c;right:131px;letter-spacing:0.384px;">Tax Cost</span>
<a href="#" class="t" id="t78" style="top:557px;font:bold 9.3px/11px 'DejaVu Sans Condensed', 'DejaVu Sans', sans-serif;color:#0a389c;right:52px;letter-spacing:0.099px;text-decoration:underline;">Est</a>
<a href="#" class="t" id="t79" style="top:569px;font:bold 9.3px/11px 'DejaVu Sans Condensed', 'DejaVu Sans', sans-serif;color:#0a389c;right:52px;letter-spacing:0.264px;text-decoration:underline;">Extended Cost</a>
<span class="t" id="t80" style="top:569px;font:bold 9.3px/11px 'DejaVu Sans Condensed', 'DejaVu Sans', sans-serif;color:#0a389c;left:837.4px;">Contract</span>
<svg style="left:21.6px;top:589.1px" width="12.4" height="12.4" viewBox="0 0 13 13"><path d="M0.6 12.2 L1.38 9.3 L3.5 11.42 Z" fill="#fff" stroke="#151515" stroke-width="0.9" stroke-linejoin="round"/><path d="M0.5 12.3 L0.95 10.6 L2.2 11.85 Z" fill="#000"/><path d="M1.38 9.3 L9.14 1.54 L11.26 3.66 L3.5 11.42 Z" fill="#f2da44" stroke="#151515" stroke-width="0.9" stroke-linejoin="round"/><path d="M9.14 1.54 L10.54 0.3 L12.5 2.26 L11.26 3.66 Z" fill="#f0c4b0" stroke="#151515" stroke-width="0.9" stroke-linejoin="round"/></svg>
<a href="#" class="t" id="t81" style="top:588px;font:normal 9.3px/11px 'DejaVu Sans', 'Liberation Sans', sans-serif;color:#1238a2;left:43.3px;letter-spacing:0.217px;">Menu</a>
<svg style="left:21.6px;top:635.1px" width="12.4" height="12.4" viewBox="0 0 13 13"><path d="M0.6 12.2 L1.38 9.3 L3.5 11.42 Z" fill="#fff" stroke="#151515" stroke-width="0.9" stroke-linejoin="round"/><path d="M0.5 12.3 L0.95 10.6 L2.2 11.85 Z" fill="#000"/><path d="M1.38 9.3 L9.14 1.54 L11.26 3.66 L3.5 11.42 Z" fill="#f2da44" stroke="#151515" stroke-width="0.9" stroke-linejoin="round"/><path d="M9.14 1.54 L10.54 0.3 L12.5 2.26 L11.26 3.66 Z" fill="#f0c4b0" stroke="#151515" stroke-width="0.9" stroke-linejoin="round"/></svg>
<a href="#" class="t" id="t82" style="top:634px;font:normal 9.3px/11px 'DejaVu Sans', 'Liberation Sans', sans-serif;color:#1238a2;left:43.3px;letter-spacing:0.217px;">Menu</a>
<svg style="left:21.6px;top:681.1px" width="12.4" height="12.4" viewBox="0 0 13 13"><path d="M0.6 12.2 L1.38 9.3 L3.5 11.42 Z" fill="#fff" stroke="#151515" stroke-width="0.9" stroke-linejoin="round"/><path d="M0.5 12.3 L0.95 10.6 L2.2 11.85 Z" fill="#000"/><path d="M1.38 9.3 L9.14 1.54 L11.26 3.66 L3.5 11.42 Z" fill="#f2da44" stroke="#151515" stroke-width="0.9" stroke-linejoin="round"/><path d="M9.14 1.54 L10.54 0.3 L12.5 2.26 L11.26 3.66 Z" fill="#f0c4b0" stroke="#151515" stroke-width="0.9" stroke-linejoin="round"/></svg>
<a href="#" class="t" id="t83" style="top:680px;font:normal 9.3px/11px 'DejaVu Sans', 'Liberation Sans', sans-serif;color:#1238a2;left:43.3px;letter-spacing:0.217px;">Menu</a>
<span class="t" id="t84" style="top:588px;font:normal 11px/13px 'DejaVu Sans', 'Liberation Sans', sans-serif;color:#151515;left:179.3px;letter-spacing:0.210px;">Portable</span>
<span class="t" id="t85" style="top:601px;font:normal 11px/13px 'DejaVu Sans', 'Liberation Sans', sans-serif;color:#151515;left:179.3px;letter-spacing:0.210px;">oxygen tank</span>
<span class="t" id="t86" style="top:634px;font:normal 11px/13px 'DejaVu Sans', 'Liberation Sans', sans-serif;color:#151515;left:179.3px;letter-spacing:0.210px;">Lens</span>
<span class="t" id="t87" style="top:647px;font:normal 11px/13px 'DejaVu Sans', 'Liberation Sans', sans-serif;color:#151515;left:179.3px;letter-spacing:0.210px;">changer,</span>
<span class="t" id="t88" style="top:660px;font:normal 11px/13px 'DejaVu Sans', 'Liberation Sans', sans-serif;color:#151515;left:179.3px;letter-spacing:0.210px;">replacement</span>
<span class="t" id="t89" style="top:680px;font:normal 11px/13px 'DejaVu Sans', 'Liberation Sans', sans-serif;color:#151515;left:179.3px;letter-spacing:0.210px;">LINER</span>
<span class="t" id="t90" style="top:588px;font:normal 11px/13px 'DejaVu Sans', 'Liberation Sans', sans-serif;color:#151515;left:261.4px;letter-spacing:0.346px;">UNIVERSAL</span>
<span class="t" id="t91" style="top:634px;font:normal 11px/13px 'DejaVu Sans', 'Liberation Sans', sans-serif;color:#151515;left:261.4px;letter-spacing:0.210px;">STANLEY</span>
<span class="t" id="t92" style="top:679px;font:normal 11px/13px 'DejaVu Sans', 'Liberation Sans', sans-serif;color:#151515;left:262.7px;letter-spacing:0.210px;">3M</span>
<span class="t" id="t93" style="top:634px;font:normal 11px/13px 'DejaVu Sans', 'Liberation Sans', sans-serif;color:#151515;left:334.4px;letter-spacing:0.210px;">91433</span>
<span class="t" id="t94" style="top:679px;font:normal 11px/13px 'DejaVu Sans', 'Liberation Sans', sans-serif;color:#151515;left:336.4px;letter-spacing:-0.027px;">1045AAA</span>
<svg style="left:133px;top:679.4px" width="7" height="12" viewBox="0 0 7 12"><rect x="3.2" y="0" width="2.8" height="2.4" fill="#767676"/><path d="M0.6 4.6 L5.6 3.8 L4.2 10.4 L5.9 10.4 L5.7 11.6 L0.4 11.6 L0.6 10.4 L2.1 10.4 L3.1 5.6 L0.5 5.8 Z" fill="#6e6e6e"/></svg>
<span class="t" id="t95" style="top:681px;font:normal 11px/13px 'DejaVu Sans', 'Liberation Sans', sans-serif;color:#151515;left:141.8px;letter-spacing:-0.300px;">1045</span>
<div style="left:402px;top:588px;width:47px;height:19.5px;background:#fff;border:1px solid #5a5a5a;"></div>
<span class="t" id="t96" style="top:592px;font:normal 10.67px/12px 'Liberation Sans', 'DejaVu Sans', sans-serif;color:#333;right:437.6px;">3</span>
<div style="left:456px;top:588px;width:28px;height:19.5px;background:#fff;border:1px solid #5a5a5a;"></div>
<span class="t" id="t97" style="top:592px;font:normal 11px/13px 'DejaVu Sans', 'Liberation Sans', sans-serif;color:#222;left:459.3px;letter-spacing:0.210px;">EA</span>
<div style="left:485.5px;top:590.6px;width:17px;height:17.6px;background:#fcfcfc;"></div>
<svg style="left:488px;top:598.7px" width="11" height="3" viewBox="0 0 11 3"><rect x="0" y="0" width="3" height="3" fill="#2a2a2a"/><rect x="4" y="0" width="3" height="3" fill="#2a2a2a"/><rect x="8" y="0" width="3" height="3" fill="#2a2a2a"/></svg>
<span class="t" id="t98" style="top:588px;font:normal 11px/13px 'DejaVu Sans', 'Liberation Sans', sans-serif;color:#151515;left:510px;letter-spacing:0.210px;">0 EA</span>
<span class="t" id="t99" style="top:588px;font:normal 11px/13px 'DejaVu Sans', 'Liberation Sans', sans-serif;color:#151515;right:224.39999999999998px;letter-spacing:0.210px;">32.00</span>
<span class="t" id="t100" style="top:588px;font:normal 11px/13px 'DejaVu Sans', 'Liberation Sans', sans-serif;color:#151515;right:185.39999999999998px;letter-spacing:0.210px;">0.00</span>
<span class="t" id="t101" style="top:588px;font:normal 11px/13px 'DejaVu Sans', 'Liberation Sans', sans-serif;color:#151515;right:135.39999999999998px;letter-spacing:0.210px;">7.68</span>
<span class="t" id="t102" style="top:588px;font:normal 11px/13px 'DejaVu Sans', 'Liberation Sans', sans-serif;color:#151515;right:52.39999999999998px;letter-spacing:0.210px;">103.68</span>
<div style="left:402px;top:634px;width:47px;height:19.5px;background:#fff;border:1px solid #5a5a5a;"></div>
<span class="t" id="t103" style="top:638px;font:normal 10.67px/12px 'Liberation Sans', 'DejaVu Sans', sans-serif;color:#333;right:437.6px;">1</span>
<div style="left:456px;top:634px;width:28px;height:19.5px;background:#fff;border:1px solid #5a5a5a;"></div>
<span class="t" id="t104" style="top:638px;font:normal 11px/13px 'DejaVu Sans', 'Liberation Sans', sans-serif;color:#222;left:459.3px;letter-spacing:0.210px;">EA</span>
<div style="left:485.5px;top:636.6px;width:17px;height:17.6px;background:#fcfcfc;"></div>
<svg style="left:488px;top:644.7px" width="11" height="3" viewBox="0 0 11 3"><rect x="0" y="0" width="3" height="3" fill="#2a2a2a"/><rect x="4" y="0" width="3" height="3" fill="#2a2a2a"/><rect x="8" y="0" width="3" height="3" fill="#2a2a2a"/></svg>
<span class="t" id="t105" style="top:634px;font:normal 11px/13px 'DejaVu Sans', 'Liberation Sans', sans-serif;color:#151515;left:510px;letter-spacing:0.210px;">0 EA</span>
<span class="t" id="t106" style="top:634px;font:normal 11px/13px 'DejaVu Sans', 'Liberation Sans', sans-serif;color:#151515;right:224.39999999999998px;letter-spacing:0.210px;">0.00</span>
<span class="t" id="t107" style="top:634px;font:normal 11px/13px 'DejaVu Sans', 'Liberation Sans', sans-serif;color:#151515;right:185.39999999999998px;letter-spacing:0.210px;">0.00</span>
<span class="t" id="t108" style="top:634px;font:normal 11px/13px 'DejaVu Sans', 'Liberation Sans', sans-serif;color:#151515;right:135.39999999999998px;letter-spacing:0.210px;">0.00</span>
<span class="t" id="t109" style="top:634px;font:normal 11px/13px 'DejaVu Sans', 'Liberation Sans', sans-serif;color:#151515;right:52.39999999999998px;letter-spacing:0.210px;">0.00</span>
<div style="left:402px;top:680px;width:47px;height:19.5px;background:#fff;border:1px solid #5a5a5a;"></div>
<span class="t" id="t110" style="top:684px;font:normal 10.67px/12px 'Liberation Sans', 'DejaVu Sans', sans-serif;color:#333;right:437.6px;">3</span>
<div style="left:456px;top:680px;width:28px;height:19.5px;background:#fff;border:1px solid #5a5a5a;"></div>
<span class="t" id="t111" style="top:684px;font:normal 11px/13px 'DejaVu Sans', 'Liberation Sans', sans-serif;color:#222;left:459.3px;letter-spacing:0.210px;">CS</span>
<div style="left:485.5px;top:682.6px;width:17px;height:17.6px;background:#fcfcfc;"></div>
<svg style="left:488px;top:690.7px" width="11" height="3" viewBox="0 0 11 3"><rect x="0" y="0" width="3" height="3" fill="#2a2a2a"/><rect x="4" y="0" width="3" height="3" fill="#2a2a2a"/><rect x="8" y="0" width="3" height="3" fill="#2a2a2a"/></svg>
<span class="t" id="t112" style="top:682px;font:normal 11px/13px 'DejaVu Sans', 'Liberation Sans', sans-serif;color:#151515;left:510px;letter-spacing:0.210px;">3 CS</span>
<span class="t" id="t113" style="top:681px;font:normal 11px/13px 'DejaVu Sans', 'Liberation Sans', sans-serif;color:#151515;right:224.39999999999998px;letter-spacing:0.210px;">49.72</span>
<span class="t" id="t114" style="top:680px;font:normal 11px/13px 'DejaVu Sans', 'Liberation Sans', sans-serif;color:#151515;right:185.39999999999998px;letter-spacing:0.210px;">0.00</span>
<span class="t" id="t115" style="top:680px;font:normal 11px/13px 'DejaVu Sans', 'Liberation Sans', sans-serif;color:#151515;right:135.39999999999998px;letter-spacing:0.210px;">0.00</span>
<span class="t" id="t116" style="top:681px;font:normal 11px/13px 'DejaVu Sans', 'Liberation Sans', sans-serif;color:#151515;right:52.39999999999998px;letter-spacing:0.210px;">149.15</span>
<div style="left:319px;top:656px;width:1px;height:1.4px;background:#4a68b8;"></div>
<div style="left:837px;top:586px;width:44px;height:15.7px;background:#eeeeee;"></div>
<svg style="left:839.7px;top:589px" width="7" height="12" viewBox="0 0 7 12"><rect x="3.2" y="0" width="2.8" height="2.4" fill="#767676"/><path d="M0.6 4.6 L5.6 3.8 L4.2 10.4 L5.9 10.4 L5.7 11.6 L0.4 11.6 L0.6 10.4 L2.1 10.4 L3.1 5.6 L0.5 5.8 Z" fill="#6e6e6e"/></svg>
<span class="t" id="t117" style="top:587px;font:normal 11px/13px 'DejaVu Sans', 'Liberation Sans', sans-serif;color:#151515;left:851.5px;letter-spacing:0.210px;">MLM</span>
<svg style="left:0;top:0" width="883" height="725" viewBox="0 0 883 725"><path d="M873 552.6 874.2 552.6 L874.2 553.1 L874.4 553.6 L874.8 554.1 L875.5 554.6 L876.2 555.1 L876.9 555.6 L877.2 556.1 L876.8 556.6 L876.0 557.1 L875.1 557.6 L874.5 558.1 L874.5 558.6 L875.0 559.1 L875.7 559.6 L876.4 560.1 L876.8 560.6 L876.9 561.1 L876.9 561.6 L876.8 562.1 L876.4 562.6 L875.7 563.1 L874.9 563.6 L874.2 564.1 L874.1 564.6 L874.6 565.1 L875.5 565.6 L876.3 566.1 L876.7 566.6 L876.5 567.1 L875.9 567.6 L875.2 568.1 L874.6 568.6 L874.2 569.1 L873.9 569.6 L873.8 570.1 L873.9 570.6 L874.4 571.1 L875.1 571.6 L875.9 572.1 L876.4 572.6 L876.2 573.1 L875.5 573.6 L874.6 574.1 L873.9 574.6 L873.6 575.1 L873.9 575.6 L874.6 576.1 L875.2 576.6 L875.7 577.1 L876.2 577.6 L876.5 578.1 L876.7 578.6 L876.5 579.1 L876.0 579.6 L875.2 580.1 L874.5 580.6 L874.3 581.1 L874.7 581.6 L875.6 582.1 L876.5 582.6 L877.2 583.1 L877.3 583.6 L877.0 584.1 L876.5 584.6 L876.0 585.1 L875.5 585.6 L875.0 586.1 L874.7 586.6 L874.5 587.1 L874.8 587.6 L875.5 588.1 L876.3 588.6 L876.9 589.1 L876.9 589.6 L876.3 590.1 L875.3 590.6 L874.4 591.1 L873.8 591.6 L873.8 592.1 L874.0 592.6 L874.4 593.1 L874.8 593.6 L875.3 594.1 L875.7 594.6 L876.0 595.1 L876.0 595.6 L875.6 596.1 L874.7 596.6 L873.9 597.1 L873.4 597.6 L873.6 598.1 L874.3 598.6 L875.3 599.1 L876.1 599.6 L876.5 600.1 L876.5 600.6 L876.3 601.1 L876.0 601.6 L875.6 602.1 L875.2 602.6 L874.7 603.1 L874.5 603.6 L874.7 604.1 L875.4 604.6 L876.3 605.1 L877.2 605.6 L877.6 606.1 L877.3 606.6 L876.5 607.1 L875.7 607.6 L875.1 608.1 L874.8 608.6 L874.8 609.1 L875.0 609.6 L875.3 610.1 L875.7 610.6 L876.2 611.1 L876.7 611.6 L876.8 612.1 L876.5 612.6 L875.6 613.1 L874.5 613.6 L873.7 614.1 L873.5 614.6 L873.9 615.1 L874.6 615.6 L875.3 616.1 L875.7 616.6 L875.9 617.1 L875.8 617.6 L875.6 618.1 L875.2 618.6 L874.7 619.1 L874.1 619.6 L873.6 620.1 L873.5 620.6 L874.0 621.1 L875.0 621.6 L876.0 622.1 L876.6 622.6 L876.7 623.1 L876.2 623.6 L875.6 624.1 L875.0 624.6 L874.7 625.1 L874.7 625.6 L874.8 626.1 L875.0 626.6 L875.5 627.1 L876.2 627.6 L876.9 628.1 L877.4 628.6 L877.4 629.1 L876.8 629.6 L875.8 630.1 L874.9 630.6 L874.5 631.1 L874.6 631.6 L875.2 632.1 L875.8 632.6 L876.3 633.1 L876.6 633.6 L876.6 634.1 L876.6 634.6 L876.3 635.1 L875.7 635.6 L874.9 636.1 L874.1 636.6 L873.6 637.1 L873.8 637.6 L874.5 638.1 L875.4 638.6 L876.1 639.1 L876.3 639.6 L876.0 640.1 L875.3 640.6 L874.7 641.1 L874.3 641.6 L874.0 642.1 L873.8 642.6 L873.8 643.1 L874.1 643.6 L874.8 644.1 L875.7 644.6 L876.4 645.1 L876.7 645.6 L876.3 646.1 L875.5 646.6 L874.7 647.1 L874.2 647.6 L874.2 648.1 L874.7 648.6 L875.3 649.1 L875.9 649.6 L876.4 650.1 L876.7 650.6 L877.0 651.1 L877.0 651.6 L876.7 652.1 L876.0 652.6 L875.1 653.1 L874.5 653.6 L874.5 654.1 L875.0 654.6 L875.9 655.1 L876.7 655.6 L877.1 656.1 L876.9 656.6 L876.5 657.1 L875.9 657.6 L875.4 658.1 L874.9 658.6 L874.4 659.1 L874.1 659.6 L874.1 660.1 L874.5 660.6 L875.3 661.1 L876.1 661.6 L876.5 662.1 L876.3 662.6 L875.5 663.1 L874.6 663.6 L873.8 664.1 L873.6 664.6 L873.7 665.1 L874.1 665.6 L874.6 666.1 L875.0 666.6 L875.5 667.1 L876.0 667.6 L876.3 668.1 L876.2 668.6 L875.6 669.1 L874.7 669.6 L874.0 670.1 L873.8 670.6 L874.3 671.1 L875.2 671.6 L876.1 672.1 L876.7 672.6 L876.9 673.1 L876.8 673.6 L876.6 674.1 L876.2 674.6 L875.8 675.1 L875.3 675.6 L874.8 676.1 L874.7 676.6 L875.0 677.1 L875.8 677.6 L876.7 678.1 L877.3 678.6 L877.4 679.1 L876.8 679.6 L875.9 680.1 L875.1 680.6 L874.6 681.1 L874.4 681.6 L874.5 682.1 L874.7 682.6 L875.0 683.1 L875.4 683.6 L876.0 684.1 L876.4 684.6 L876.3 685.1 L875.7 685.6 L874.8 686.1 L873.8 686.6 L873.3 687.1 L873.4 687.6 L874.0 688.1 L874.8 688.6 L875.5 689.1 L875.8 689.6 L875.9 690.1 L875.9 690.6 L875.7 691.1 L875.3 691.6 L874.7 692.1 L874.2 692.6 L873.8 693.1 L874.1 693.6 L874.8 694.1 L875.9 694.6 L876.8 695.1 L877.2 695.6 L877.0 696.1 L876.4 696.6 L875.7 697.1 L875.3 697.6 L875.0 698.1 L875.0 698.6 L875.1 699.1 L875.3 699.6 L875.9 700.1 L876.6 700.6 L877.2 701.1 L877.4 701.6 L877.1 702.1 L876.2 702.6 L875.1 703.1 L874.4 703.6 L874.2 704.1 L874.5 704.6 L875.0 705.1 L875.6 705.6 L875.9 706.1 L876.1 706.6 L876.2 707.1 L876.0 707.6 L875.6 708.1 L874.9 708.6 L874.1 709.1 L873.4 709.6 L873.3 710.1 L873.8 710.6 L874.7 711.1 L875.6 711.6 L876.2 712.1 L876.2 712.6 L875.8 713.1 L875.2 713.6 L874.7 714.1 L874.4 714.6 L874.2 715.1 L874.1 715.6 L874.3 716.1 L874.8 716.6 L875.6 717.1 L876.5 717.6 L877.1 718.1 L877.1 718.6 L876.5 719.1 L875.6 719.6 L874.9 720.1 L874.6 720.6 L874.8 721.1 L875.2 721.6 L873 722 Z" fill="#fff"/><path d="M874.2 552.6 L874.2 553.1 L874.4 553.6 L874.8 554.1 L875.5 554.6 L876.2 555.1 L876.9 555.6 L877.2 556.1 L876.8 556.6 L876.0 557.1 L875.1 557.6 L874.5 558.1 L874.5 558.6 L875.0 559.1 L875.7 559.6 L876.4 560.1 L876.8 560.6 L876.9 561.1 L876.9 561.6 L876.8 562.1 L876.4 562.6 L875.7 563.1 L874.9 563.6 L874.2 564.1 L874.1 564.6 L874.6 565.1 L875.5 565.6 L876.3 566.1 L876.7 566.6 L876.5 567.1 L875.9 567.6 L875.2 568.1 L874.6 568.6 L874.2 569.1 L873.9 569.6 L873.8 570.1 L873.9 570.6 L874.4 571.1 L875.1 571.6 L875.9 572.1 L876.4 572.6 L876.2 573.1 L875.5 573.6 L874.6 574.1 L873.9 574.6 L873.6 575.1 L873.9 575.6 L874.6 576.1 L875.2 576.6 L875.7 577.1 L876.2 577.6 L876.5 578.1 L876.7 578.6 L876.5 579.1 L876.0 579.6 L875.2 580.1 L874.5 580.6 L874.3 581.1 L874.7 581.6 L875.6 582.1 L876.5 582.6 L877.2 583.1 L877.3 583.6 L877.0 584.1 L876.5 584.6 L876.0 585.1 L875.5 585.6 L875.0 586.1 L874.7 586.6 L874.5 587.1 L874.8 587.6 L875.5 588.1 L876.3 588.6 L876.9 589.1 L876.9 589.6 L876.3 590.1 L875.3 590.6 L874.4 591.1 L873.8 591.6 L873.8 592.1 L874.0 592.6 L874.4 593.1 L874.8 593.6 L875.3 594.1 L875.7 594.6 L876.0 595.1 L876.0 595.6 L875.6 596.1 L874.7 596.6 L873.9 597.1 L873.4 597.6 L873.6 598.1 L874.3 598.6 L875.3 599.1 L876.1 599.6 L876.5 600.1 L876.5 600.6 L876.3 601.1 L876.0 601.6 L875.6 602.1 L875.2 602.6 L874.7 603.1 L874.5 603.6 L874.7 604.1 L875.4 604.6 L876.3 605.1 L877.2 605.6 L877.6 606.1 L877.3 606.6 L876.5 607.1 L875.7 607.6 L875.1 608.1 L874.8 608.6 L874.8 609.1 L875.0 609.6 L875.3 610.1 L875.7 610.6 L876.2 611.1 L876.7 611.6 L876.8 612.1 L876.5 612.6 L875.6 613.1 L874.5 613.6 L873.7 614.1 L873.5 614.6 L873.9 615.1 L874.6 615.6 L875.3 616.1 L875.7 616.6 L875.9 617.1 L875.8 617.6 L875.6 618.1 L875.2 618.6 L874.7 619.1 L874.1 619.6 L873.6 620.1 L873.5 620.6 L874.0 621.1 L875.0 621.6 L876.0 622.1 L876.6 622.6 L876.7 623.1 L876.2 623.6 L875.6 624.1 L875.0 624.6 L874.7 625.1 L874.7 625.6 L874.8 626.1 L875.0 626.6 L875.5 627.1 L876.2 627.6 L876.9 628.1 L877.4 628.6 L877.4 629.1 L876.8 629.6 L875.8 630.1 L874.9 630.6 L874.5 631.1 L874.6 631.6 L875.2 632.1 L875.8 632.6 L876.3 633.1 L876.6 633.6 L876.6 634.1 L876.6 634.6 L876.3 635.1 L875.7 635.6 L874.9 636.1 L874.1 636.6 L873.6 637.1 L873.8 637.6 L874.5 638.1 L875.4 638.6 L876.1 639.1 L876.3 639.6 L876.0 640.1 L875.3 640.6 L874.7 641.1 L874.3 641.6 L874.0 642.1 L873.8 642.6 L873.8 643.1 L874.1 643.6 L874.8 644.1 L875.7 644.6 L876.4 645.1 L876.7 645.6 L876.3 646.1 L875.5 646.6 L874.7 647.1 L874.2 647.6 L874.2 648.1 L874.7 648.6 L875.3 649.1 L875.9 649.6 L876.4 650.1 L876.7 650.6 L877.0 651.1 L877.0 651.6 L876.7 652.1 L876.0 652.6 L875.1 653.1 L874.5 653.6 L874.5 654.1 L875.0 654.6 L875.9 655.1 L876.7 655.6 L877.1 656.1 L876.9 656.6 L876.5 657.1 L875.9 657.6 L875.4 658.1 L874.9 658.6 L874.4 659.1 L874.1 659.6 L874.1 660.1 L874.5 660.6 L875.3 661.1 L876.1 661.6 L876.5 662.1 L876.3 662.6 L875.5 663.1 L874.6 663.6 L873.8 664.1 L873.6 664.6 L873.7 665.1 L874.1 665.6 L874.6 666.1 L875.0 666.6 L875.5 667.1 L876.0 667.6 L876.3 668.1 L876.2 668.6 L875.6 669.1 L874.7 669.6 L874.0 670.1 L873.8 670.6 L874.3 671.1 L875.2 671.6 L876.1 672.1 L876.7 672.6 L876.9 673.1 L876.8 673.6 L876.6 674.1 L876.2 674.6 L875.8 675.1 L875.3 675.6 L874.8 676.1 L874.7 676.6 L875.0 677.1 L875.8 677.6 L876.7 678.1 L877.3 678.6 L877.4 679.1 L876.8 679.6 L875.9 680.1 L875.1 680.6 L874.6 681.1 L874.4 681.6 L874.5 682.1 L874.7 682.6 L875.0 683.1 L875.4 683.6 L876.0 684.1 L876.4 684.6 L876.3 685.1 L875.7 685.6 L874.8 686.1 L873.8 686.6 L873.3 687.1 L873.4 687.6 L874.0 688.1 L874.8 688.6 L875.5 689.1 L875.8 689.6 L875.9 690.1 L875.9 690.6 L875.7 691.1 L875.3 691.6 L874.7 692.1 L874.2 692.6 L873.8 693.1 L874.1 693.6 L874.8 694.1 L875.9 694.6 L876.8 695.1 L877.2 695.6 L877.0 696.1 L876.4 696.6 L875.7 697.1 L875.3 697.6 L875.0 698.1 L875.0 698.6 L875.1 699.1 L875.3 699.6 L875.9 700.1 L876.6 700.6 L877.2 701.1 L877.4 701.6 L877.1 702.1 L876.2 702.6 L875.1 703.1 L874.4 703.6 L874.2 704.1 L874.5 704.6 L875.0 705.1 L875.6 705.6 L875.9 706.1 L876.1 706.6 L876.2 707.1 L876.0 707.6 L875.6 708.1 L874.9 708.6 L874.1 709.1 L873.4 709.6 L873.3 710.1 L873.8 710.6 L874.7 711.1 L875.6 711.6 L876.2 712.1 L876.2 712.6 L875.8 713.1 L875.2 713.6 L874.7 714.1 L874.4 714.6 L874.2 715.1 L874.1 715.6 L874.3 716.1 L874.8 716.6 L875.6 717.1 L876.5 717.6 L877.1 718.1 L877.1 718.6 L876.5 719.1 L875.6 719.6 L874.9 720.1 L874.6 720.6 L874.8 721.1 L875.2 721.6 L881 722 L881 552.6 Z" fill="#d6d6d6"/><path d="M874.2 552.6 L874.2 553.1 L874.4 553.6 L874.8 554.1 L875.5 554.6 L876.2 555.1 L876.9 555.6 L877.2 556.1 L876.8 556.6 L876.0 557.1 L875.1 557.6 L874.5 558.1 L874.5 558.6 L875.0 559.1 L875.7 559.6 L876.4 560.1 L876.8 560.6 L876.9 561.1 L876.9 561.6 L876.8 562.1 L876.4 562.6 L875.7 563.1 L874.9 563.6 L874.2 564.1 L874.1 564.6 L874.6 565.1 L875.5 565.6 L876.3 566.1 L876.7 566.6 L876.5 567.1 L875.9 567.6 L875.2 568.1 L874.6 568.6 L874.2 569.1 L873.9 569.6 L873.8 570.1 L873.9 570.6 L874.4 571.1 L875.1 571.6 L875.9 572.1 L876.4 572.6 L876.2 573.1 L875.5 573.6 L874.6 574.1 L873.9 574.6 L873.6 575.1 L873.9 575.6 L874.6 576.1 L875.2 576.6 L875.7 577.1 L876.2 577.6 L876.5 578.1 L876.7 578.6 L876.5 579.1 L876.0 579.6 L875.2 580.1 L874.5 580.6 L874.3 581.1 L874.7 581.6 L875.6 582.1 L876.5 582.6 L877.2 583.1 L877.3 583.6 L877.0 584.1 L876.5 584.6 L876.0 585.1 L875.5 585.6 L875.0 586.1 L874.7 586.6 L874.5 587.1 L874.8 587.6 L875.5 588.1 L876.3 588.6 L876.9 589.1 L876.9 589.6 L876.3 590.1 L875.3 590.6 L874.4 591.1 L873.8 591.6 L873.8 592.1 L874.0 592.6 L874.4 593.1 L874.8 593.6 L875.3 594.1 L875.7 594.6 L876.0 595.1 L876.0 595.6 L875.6 596.1 L874.7 596.6 L873.9 597.1 L873.4 597.6 L873.6 598.1 L874.3 598.6 L875.3 599.1 L876.1 599.6 L876.5 600.1 L876.5 600.6 L876.3 601.1 L876.0 601.6 L875.6 602.1 L875.2 602.6 L874.7 603.1 L874.5 603.6 L874.7 604.1 L875.4 604.6 L876.3 605.1 L877.2 605.6 L877.6 606.1 L877.3 606.6 L876.5 607.1 L875.7 607.6 L875.1 608.1 L874.8 608.6 L874.8 609.1 L875.0 609.6 L875.3 610.1 L875.7 610.6 L876.2 611.1 L876.7 611.6 L876.8 612.1 L876.5 612.6 L875.6 613.1 L874.5 613.6 L873.7 614.1 L873.5 614.6 L873.9 615.1 L874.6 615.6 L875.3 616.1 L875.7 616.6 L875.9 617.1 L875.8 617.6 L875.6 618.1 L875.2 618.6 L874.7 619.1 L874.1 619.6 L873.6 620.1 L873.5 620.6 L874.0 621.1 L875.0 621.6 L876.0 622.1 L876.6 622.6 L876.7 623.1 L876.2 623.6 L875.6 624.1 L875.0 624.6 L874.7 625.1 L874.7 625.6 L874.8 626.1 L875.0 626.6 L875.5 627.1 L876.2 627.6 L876.9 628.1 L877.4 628.6 L877.4 629.1 L876.8 629.6 L875.8 630.1 L874.9 630.6 L874.5 631.1 L874.6 631.6 L875.2 632.1 L875.8 632.6 L876.3 633.1 L876.6 633.6 L876.6 634.1 L876.6 634.6 L876.3 635.1 L875.7 635.6 L874.9 636.1 L874.1 636.6 L873.6 637.1 L873.8 637.6 L874.5 638.1 L875.4 638.6 L876.1 639.1 L876.3 639.6 L876.0 640.1 L875.3 640.6 L874.7 641.1 L874.3 641.6 L874.0 642.1 L873.8 642.6 L873.8 643.1 L874.1 643.6 L874.8 644.1 L875.7 644.6 L876.4 645.1 L876.7 645.6 L876.3 646.1 L875.5 646.6 L874.7 647.1 L874.2 647.6 L874.2 648.1 L874.7 648.6 L875.3 649.1 L875.9 649.6 L876.4 650.1 L876.7 650.6 L877.0 651.1 L877.0 651.6 L876.7 652.1 L876.0 652.6 L875.1 653.1 L874.5 653.6 L874.5 654.1 L875.0 654.6 L875.9 655.1 L876.7 655.6 L877.1 656.1 L876.9 656.6 L876.5 657.1 L875.9 657.6 L875.4 658.1 L874.9 658.6 L874.4 659.1 L874.1 659.6 L874.1 660.1 L874.5 660.6 L875.3 661.1 L876.1 661.6 L876.5 662.1 L876.3 662.6 L875.5 663.1 L874.6 663.6 L873.8 664.1 L873.6 664.6 L873.7 665.1 L874.1 665.6 L874.6 666.1 L875.0 666.6 L875.5 667.1 L876.0 667.6 L876.3 668.1 L876.2 668.6 L875.6 669.1 L874.7 669.6 L874.0 670.1 L873.8 670.6 L874.3 671.1 L875.2 671.6 L876.1 672.1 L876.7 672.6 L876.9 673.1 L876.8 673.6 L876.6 674.1 L876.2 674.6 L875.8 675.1 L875.3 675.6 L874.8 676.1 L874.7 676.6 L875.0 677.1 L875.8 677.6 L876.7 678.1 L877.3 678.6 L877.4 679.1 L876.8 679.6 L875.9 680.1 L875.1 680.6 L874.6 681.1 L874.4 681.6 L874.5 682.1 L874.7 682.6 L875.0 683.1 L875.4 683.6 L876.0 684.1 L876.4 684.6 L876.3 685.1 L875.7 685.6 L874.8 686.1 L873.8 686.6 L873.3 687.1 L873.4 687.6 L874.0 688.1 L874.8 688.6 L875.5 689.1 L875.8 689.6 L875.9 690.1 L875.9 690.6 L875.7 691.1 L875.3 691.6 L874.7 692.1 L874.2 692.6 L873.8 693.1 L874.1 693.6 L874.8 694.1 L875.9 694.6 L876.8 695.1 L877.2 695.6 L877.0 696.1 L876.4 696.6 L875.7 697.1 L875.3 697.6 L875.0 698.1 L875.0 698.6 L875.1 699.1 L875.3 699.6 L875.9 700.1 L876.6 700.6 L877.2 701.1 L877.4 701.6 L877.1 702.1 L876.2 702.6 L875.1 703.1 L874.4 703.6 L874.2 704.1 L874.5 704.6 L875.0 705.1 L875.6 705.6 L875.9 706.1 L876.1 706.6 L876.2 707.1 L876.0 707.6 L875.6 708.1 L874.9 708.6 L874.1 709.1 L873.4 709.6 L873.3 710.1 L873.8 710.6 L874.7 711.1 L875.6 711.6 L876.2 712.1 L876.2 712.6 L875.8 713.1 L875.2 713.6 L874.7 714.1 L874.4 714.6 L874.2 715.1 L874.1 715.6 L874.3 716.1 L874.8 716.6 L875.6 717.1 L876.5 717.6 L877.1 718.1 L877.1 718.6 L876.5 719.1 L875.6 719.6 L874.9 720.1 L874.6 720.6 L874.8 721.1 L875.2 721.6" fill="none" stroke="#3a3a3a" stroke-width="0.85"/><rect x="873" y="583.6" width="8" height="3.2" fill="#fff"/></svg>
<div style="left:0px;top:0px;width:883px;height:2px;background:#053b7b;"></div>
<div style="left:0px;top:0px;width:2px;height:725px;background:#053b7b;"></div>
<div style="left:881px;top:0px;width:2px;height:725px;background:#053b7b;"></div>
<div style="left:0px;top:721.5px;width:883px;height:3.5px;background:#053b7b;"></div>
</div>
</body>
</html>
